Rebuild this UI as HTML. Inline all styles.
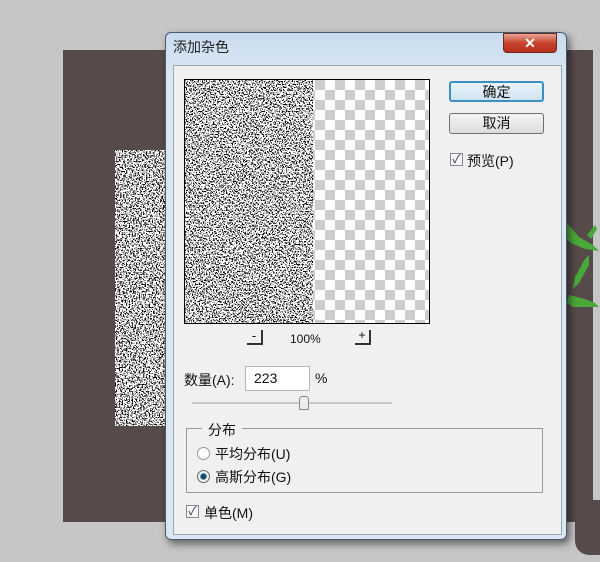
<!DOCTYPE html><html><head><meta charset="utf-8"><style>
body{margin:0;width:600px;height:562px;background:#c6c6c6;position:relative;overflow:hidden;font-family:"Liberation Sans","Noto Sans CJK SC",sans-serif;font-size:13px;color:#111}
div{position:absolute;box-sizing:border-box}
.btn{background:linear-gradient(#f4f4f4,#dcdcdc);border:1px solid #707070;border-radius:3px;text-align:center;line-height:18px;font-size:14px}
.cb{width:13px;height:13px;border:1px solid #8a8a8a;background:#f6f6ff;font-size:12px;line-height:11px;text-align:center;color:#334}
</style></head><body>
<div style="left:63px;top:50px;width:530px;height:472px;background:#574a4a"></div>
<div style="left:575px;top:500px;width:25px;height:55px;background:#574a4a;border-radius:0 0 0 14px"></div>
<svg style="position:absolute;left:115px;top:150px" width="52" height="276"><filter id="n"><feTurbulence type="fractalNoise" baseFrequency="0.7" numOctaves="2" seed="3"/><feColorMatrix type="matrix" values="0 0 0 0 1 0 0 0 0 1 0 0 0 0 1 1 0 0 0 0"/><feComponentTransfer><feFuncA type="discrete" tableValues="0 0 0 0 1 1 1 1 1"/></feComponentTransfer></filter><rect width="52" height="276" fill="#000"/><rect width="52" height="276" filter="url(#n)"/></svg>
<svg style="position:absolute;left:565px;top:215px" width="35" height="100"><g fill="#4aa83a"><polygon points="2,8 14,22 28,30 34,36 20,34 6,28 2,24"/><polygon points="22,20 30,10 32,14 26,24"/><polygon points="10,62 20,44 24,40 24,50 14,68 8,74"/><polygon points="4,80 20,84 30,88 34,92 8,92 2,88"/></g></svg>
<div style="left:165px;top:32px;width:402px;height:508px;background:linear-gradient(#c8dbee,#dae7f3 40px,#dae7f3);border:1px solid #4a5a6a;border-radius:6px;box-shadow:3px 4px 8px rgba(0,0,0,.5)"></div>
<div style="left:173px;top:37px;font-size:14px;color:#222">添加杂色</div>
<div style="left:503px;top:33px;width:54px;height:20px;background:linear-gradient(#e6a496,#c8442e 50%,#b8301c);border:1px solid #6a2a20;border-radius:0 0 4px 4px;color:#fff;text-align:center;font-weight:bold;font-size:14px;line-height:18px">✕</div>
<div style="left:173px;top:65px;width:389px;height:470px;background:#f0f0f0;border:1px solid #9aa8b6"></div>
<div style="left:184px;top:79px;width:246px;height:245px;border:1px solid #000;background-color:#fff;background-image:linear-gradient(45deg,#cdcdcd 25%,transparent 25%,transparent 75%,#cdcdcd 75%),linear-gradient(45deg,#cdcdcd 25%,transparent 25%,transparent 75%,#cdcdcd 75%);background-size:20px 20px;background-position:0 0,10px 10px"></div>
<svg style="position:absolute;left:185px;top:80px" width="128" height="243"><filter id="m"><feTurbulence type="fractalNoise" baseFrequency="0.7" numOctaves="2" seed="7"/><feColorMatrix type="matrix" values="0 0 0 0 1 0 0 0 0 1 0 0 0 0 1 1 0 0 0 0"/><feComponentTransfer><feFuncA type="discrete" tableValues="0 0 0 0 1 1 1 1 1"/></feComponentTransfer></filter><rect width="128" height="243" fill="#000"/><rect width="128" height="243" filter="url(#m)"/></svg>
<div class="btn" style="left:449px;top:81px;width:95px;height:21px;border:2px solid #3c8fc0;background:linear-gradient(#eaf4fb,#cde3f0)">确定</div>
<div class="btn" style="left:449px;top:113px;width:95px;height:21px">取消</div>
<div class="cb" style="left:450px;top:153px">✓</div>
<div style="left:467px;top:151px;font-size:14px">预览(P)</div>
<div style="left:247px;top:330px;width:16px;height:15px;border-right:2px solid #333;border-bottom:2px solid #333;text-align:center;line-height:11px">-</div>
<div style="left:290px;top:332px;font-size:12px">100%</div>
<div style="left:355px;top:330px;width:16px;height:15px;border-right:2px solid #333;border-bottom:2px solid #333;text-align:center;line-height:11px;font-size:12px">+</div>
<div style="left:184px;top:370px;font-size:14px">数量(A):</div>
<div style="left:245px;top:366px;width:65px;height:25px;border:1px solid #abb;background:#fff;padding-left:8px;line-height:22px;font-size:14px">223</div>
<div style="left:315px;top:370px;font-size:14px">%</div>
<div style="left:192px;top:402px;width:200px;height:2px;background:#c8c8c8"></div>
<div style="left:299px;top:396px;width:10px;height:14px;border:1px solid #888;border-radius:3px 3px 1px 1px;background:#eee"></div>
<div style="left:186px;top:428px;width:357px;height:65px;border:1px solid #999"></div>
<div style="left:202px;top:420px;padding:0 6px;background:#f0f0f0;font-size:14px">分布</div>
<div style="left:197px;top:447px;width:13px;height:13px;border:1px solid #999;border-radius:50%;background:#fff"></div>
<div style="left:215px;top:444px;font-size:14px">平均分布(U)</div>
<div style="left:197px;top:470px;width:13px;height:13px;border:1px solid #666;border-radius:50%;background:radial-gradient(#1c4a6a 35%,#eaf2f8 45%)"></div>
<div style="left:215px;top:467px;font-size:14px">高斯分布(G)</div>
<div class="cb" style="left:186px;top:505px">✓</div>
<div style="left:204px;top:503px;font-size:14px">单色(M)</div>
</body></html>
